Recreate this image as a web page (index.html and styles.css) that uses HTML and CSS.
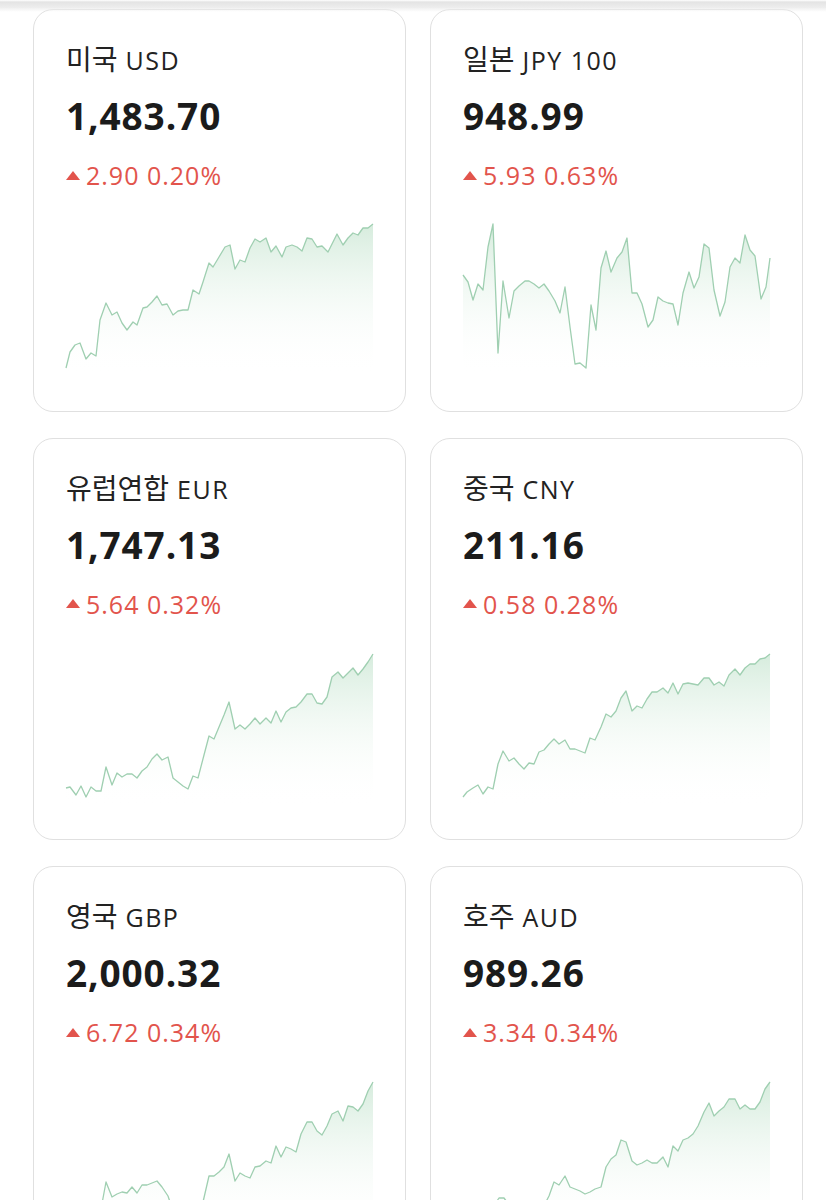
FILE: index.html
```html
<!DOCTYPE html>
<html lang="ko">
<head>
    <meta charset="utf-8">
    <title>환율</title>
    <link rel="stylesheet" href="styles.css">
</head>
<body>
    <div class="top_shadow"></div>

    <div class="rate_grid">
        <div class="rate_card">
            <div class="rate_name"><span class="kr">미국</span> USD</div>
            <div class="rate_value">1,483.70</div>
            <div class="rate_change"><svg class="arrow" viewBox="0 0 14 9"><polygon points="7,0 14,9 0,9"/></svg>2.90 0.20%</div>
            <svg class="chart" viewBox="0 0 307 160">
                <defs><linearGradient id="g1" x1="0" y1="0" x2="0" y2="1"><stop offset="0" stop-color="#d6ecdd"/><stop offset="1" stop-color="#ffffff" stop-opacity="0"/></linearGradient></defs>
                <polygon fill="url(#g1)" points="0,148 4,132 9,125 14,123 20,139 25,133 30,136 34,100 40,83 46,95 51,92 56,103 61,110 67,102 71,105 77,88 81,87 86,82 91,76 96,85 101,84 107,95 112,91 117,90 122,90 127,70 133,74 137,62 143,43 147,47 153,37 159,27 164,25 169,49 174,40 179,42 184,28 189,19 194,22 200,18 205,32 210,26 216,37 220,27 226,25 231,27 236,31 241,18 246,19 251,27 256,26 262,32 267,22 271,14 277,25 282,18 287,13 292,15 297,8 302,8 307,4 307,155 0,155"/>
                <polyline class="line" points="0,148 4,132 9,125 14,123 20,139 25,133 30,136 34,100 40,83 46,95 51,92 56,103 61,110 67,102 71,105 77,88 81,87 86,82 91,76 96,85 101,84 107,95 112,91 117,90 122,90 127,70 133,74 137,62 143,43 147,47 153,37 159,27 164,25 169,49 174,40 179,42 184,28 189,19 194,22 200,18 205,32 210,26 216,37 220,27 226,25 231,27 236,31 241,18 246,19 251,27 256,26 262,32 267,22 271,14 277,25 282,18 287,13 292,15 297,8 302,8 307,4"/>
            </svg>
        </div>

        <div class="rate_card">
            <div class="rate_name"><span class="kr">일본</span> JPY 100</div>
            <div class="rate_value">948.99</div>
            <div class="rate_change"><svg class="arrow" viewBox="0 0 14 9"><polygon points="7,0 14,9 0,9"/></svg>5.93 0.63%</div>
            <svg class="chart" viewBox="0 0 307 160">
                <defs><linearGradient id="g2" x1="0" y1="0" x2="0" y2="1"><stop offset="0" stop-color="#d6ecdd"/><stop offset="1" stop-color="#ffffff" stop-opacity="0"/></linearGradient></defs>
                <polygon fill="url(#g2)" points="0,55 5,62 10,80 15,64 20,70 25,27 30,4 35,133 40,61 46,98 51,71 56,66 62,61 66,61 71,64 76,68 81,64 86,71 92,81 97,93 102,67 107,107 112,144 117,143 123,148 128,85 133,110 138,48 143,31 148,52 154,38 159,32 164,18 169,73 174,73 179,84 185,107 190,100 195,77 200,81 205,83 210,84 215,105 220,73 226,52 231,68 236,57 241,24 246,28 251,70 257,96 262,82 267,47 272,38 277,43 282,15 287,30 292,36 298,79 303,67 307,38 307,155 0,155"/>
                <polyline class="line" points="0,55 5,62 10,80 15,64 20,70 25,27 30,4 35,133 40,61 46,98 51,71 56,66 62,61 66,61 71,64 76,68 81,64 86,71 92,81 97,93 102,67 107,107 112,144 117,143 123,148 128,85 133,110 138,48 143,31 148,52 154,38 159,32 164,18 169,73 174,73 179,84 185,107 190,100 195,77 200,81 205,83 210,84 215,105 220,73 226,52 231,68 236,57 241,24 246,28 251,70 257,96 262,82 267,47 272,38 277,43 282,15 287,30 292,36 298,79 303,67 307,38"/>
            </svg>
        </div>

        <div class="rate_card">
            <div class="rate_name"><span class="kr">유럽연합</span> EUR</div>
            <div class="rate_value">1,747.13</div>
            <div class="rate_change"><svg class="arrow" viewBox="0 0 14 9"><polygon points="7,0 14,9 0,9"/></svg>5.64 0.32%</div>
            <svg class="chart" viewBox="0 0 307 160">
                <defs><linearGradient id="g3" x1="0" y1="0" x2="0" y2="1"><stop offset="0" stop-color="#d6ecdd"/><stop offset="1" stop-color="#ffffff" stop-opacity="0"/></linearGradient></defs>
                <polygon fill="url(#g3)" points="0,139 4,138 10,146 15,137 20,148 25,138 30,142 35,142 40,118 46,136 51,124 56,128 61,125 66,125 71,129 76,122 81,118 86,110 91,105 96,111 102,108 107,129 112,133 117,137 122,140 127,127 132,129 138,106 143,87 148,90 153,78 158,66 163,53 169,80 174,76 179,80 184,75 189,69 194,75 200,69 205,74 210,62 215,73 220,63 225,59 230,58 235,53 241,45 246,45 251,54 256,55 261,48 266,28 272,23 277,29 282,24 287,19 292,26 297,20 302,13 307,5 307,157 0,157"/>
                <polyline class="line" points="0,139 4,138 10,146 15,137 20,148 25,138 30,142 35,142 40,118 46,136 51,124 56,128 61,125 66,125 71,129 76,122 81,118 86,110 91,105 96,111 102,108 107,129 112,133 117,137 122,140 127,127 132,129 138,106 143,87 148,90 153,78 158,66 163,53 169,80 174,76 179,80 184,75 189,69 194,75 200,69 205,74 210,62 215,73 220,63 225,59 230,58 235,53 241,45 246,45 251,54 256,55 261,48 266,28 272,23 277,29 282,24 287,19 292,26 297,20 302,13 307,5"/>
            </svg>
        </div>

        <div class="rate_card">
            <div class="rate_name"><span class="kr">중국</span> CNY</div>
            <div class="rate_value">211.16</div>
            <div class="rate_change"><svg class="arrow" viewBox="0 0 14 9"><polygon points="7,0 14,9 0,9"/></svg>0.58 0.28%</div>
            <svg class="chart" viewBox="0 0 307 160">
                <defs><linearGradient id="g4" x1="0" y1="0" x2="0" y2="1"><stop offset="0" stop-color="#d6ecdd"/><stop offset="1" stop-color="#ffffff" stop-opacity="0"/></linearGradient></defs>
                <polygon fill="url(#g4)" points="0,148 4,143 10,139 15,136 20,145 25,138 30,140 35,115 40,102 46,112 51,109 56,115 61,120 66,114 71,115 76,103 81,101 86,95 91,90 96,95 102,91 107,100 112,100 117,102 122,104 127,89 132,91 138,78 143,65 148,68 153,62 158,49 163,42 169,62 174,57 179,59 184,50 189,43 194,43 200,39 205,44 210,34 215,45 220,35 225,34 230,35 235,36 241,29 246,29 251,36 256,33 261,37 266,26 272,20 277,26 282,19 287,15 292,15 297,10 302,9 307,5 307,157 0,157"/>
                <polyline class="line" points="0,148 4,143 10,139 15,136 20,145 25,138 30,140 35,115 40,102 46,112 51,109 56,115 61,120 66,114 71,115 76,103 81,101 86,95 91,90 96,95 102,91 107,100 112,100 117,102 122,104 127,89 132,91 138,78 143,65 148,68 153,62 158,49 163,42 169,62 174,57 179,59 184,50 189,43 194,43 200,39 205,44 210,34 215,45 220,35 225,34 230,35 235,36 241,29 246,29 251,36 256,33 261,37 266,26 272,20 277,26 282,19 287,15 292,15 297,10 302,9 307,5"/>
            </svg>
        </div>

        <div class="rate_card">
            <div class="rate_name"><span class="kr">영국</span> GBP</div>
            <div class="rate_value">2,000.32</div>
            <div class="rate_change"><svg class="arrow" viewBox="0 0 14 9"><polygon points="7,0 14,9 0,9"/></svg>6.72 0.34%</div>
            <svg class="chart" viewBox="0 0 307 160">
                <defs><linearGradient id="g5" x1="0" y1="0" x2="0" y2="1"><stop offset="0" stop-color="#d6ecdd"/><stop offset="1" stop-color="#ffffff" stop-opacity="0"/></linearGradient></defs>
                <polygon fill="url(#g5)" points="0,140 5,138 10,142 15,136 20,140 25,135 30,133 35,132 40,105 46,120 51,117 56,115 61,116 66,110 71,116 76,108 81,108 86,106 91,104 96,110 102,119 104,125 110,135 115,140 120,145 125,142 130,133 137,125 143,99 148,99 153,95 158,90 163,77 169,104 174,96 179,99 184,101 189,90 194,89 200,84 205,86 210,69 215,80 220,70 225,72 230,75 235,57 241,45 246,45 251,54 256,58 261,49 266,37 272,34 277,44 282,29 287,30 292,34 297,27 302,14 307,5 307,157 0,157"/>
                <polyline class="line" points="0,140 5,138 10,142 15,136 20,140 25,135 30,133 35,132 40,105 46,120 51,117 56,115 61,116 66,110 71,116 76,108 81,108 86,106 91,104 96,110 102,119 104,125 110,135 115,140 120,145 125,142 130,133 137,125 143,99 148,99 153,95 158,90 163,77 169,104 174,96 179,99 184,101 189,90 194,89 200,84 205,86 210,69 215,80 220,70 225,72 230,75 235,57 241,45 246,45 251,54 256,58 261,49 266,37 272,34 277,44 282,29 287,30 292,34 297,27 302,14 307,5"/>
            </svg>
        </div>

        <div class="rate_card">
            <div class="rate_name"><span class="kr">호주</span> AUD</div>
            <div class="rate_value">989.26</div>
            <div class="rate_change"><svg class="arrow" viewBox="0 0 14 9"><polygon points="7,0 14,9 0,9"/></svg>3.34 0.34%</div>
            <svg class="chart" viewBox="0 0 307 160">
                <defs><linearGradient id="g6" x1="0" y1="0" x2="0" y2="1"><stop offset="0" stop-color="#d6ecdd"/><stop offset="1" stop-color="#ffffff" stop-opacity="0"/></linearGradient></defs>
                <polygon fill="url(#g6)" points="0,150 10,145 20,140 30,130 36,121 41,121 46,128 55,140 65,145 75,140 86,119 91,105 96,108 102,99 107,110 112,112 117,114 122,117 127,115 132,112 138,110 143,90 148,82 153,78 158,63 163,65 169,84 174,88 179,86 184,83 189,86 194,86 200,80 205,90 210,69 215,74 220,63 225,61 230,57 235,49 241,35 246,26 251,39 256,34 261,30 266,22 272,22 277,32 282,28 287,32 292,32 297,25 302,12 307,5 307,157 0,157"/>
                <polyline class="line" points="0,150 10,145 20,140 30,130 36,121 41,121 46,128 55,140 65,145 75,140 86,119 91,105 96,108 102,99 107,110 112,112 117,114 122,117 127,115 132,112 138,110 143,90 148,82 153,78 158,63 163,65 169,84 174,88 179,86 184,83 189,86 194,86 200,80 205,90 210,69 215,74 220,63 225,61 230,57 235,49 241,35 246,26 251,39 256,34 261,30 266,22 272,22 277,32 282,28 287,32 292,32 297,25 302,12 307,5"/>
            </svg>
        </div>
    </div>
</body>
</html>
```

FILE: styles.css
```css
body {
    font-family: "Open Sans", "Noto Sans CJK KR", sans-serif;
    background-color: #fff;
    margin: 0;
    padding: 0;
}

/* тень от шапки сверху */
.top_shadow {
    position: fixed;
    top: 0;
    left: 0;
    right: 0;
    height: 12px;
    background: linear-gradient(#ffffff 0, #e4e4e4 2px, #ececec 7px, rgba(255, 255, 255, 0) 12px);
    z-index: 2;
}

.rate_grid {
    display: grid;
    grid-template-columns: 1fr 1fr;
    column-gap: 24px;
    row-gap: 26px;
    padding: 9px 25px 40px 33px;
}

.rate_card {
    border: 1.5px solid #e0e0e0;
    border-radius: 20px;
    padding: 30px 32px 30.5px 32px;
    display: flex;
    flex-direction: column;
}

.rate_name {
    height: 36px;
    font-size: 25px;
    line-height: 36px;
    letter-spacing: 1.5px;
    color: #222;
    white-space: nowrap;
}

.rate_name .kr {
    font-family: "Noto Sans CJK KR", sans-serif;
    font-size: 28px;
    letter-spacing: 0;
}

.rate_value {
    margin-top: 18px;
    font-size: 37px;
    line-height: 44px;
    font-weight: 700;
    letter-spacing: 0.9px;
    color: #1b1b1b;
}

.rate_change {
    margin-top: 19px;
    font-size: 25px;
    line-height: 36px;
    letter-spacing: 1px;
    color: #e2544c;
    display: flex;
    align-items: center;
}

.arrow {
    width: 14px;
    height: 9px;
    margin-right: 6px;
    fill: #e2544c;
}

.chart {
    margin-top: 27px;
    width: 307px;
    height: 160px;
    overflow: visible;
}

.chart .line {
    fill: none;
    stroke: #9fcfb1;
    stroke-width: 1.3;
    stroke-linejoin: round;
}
```
